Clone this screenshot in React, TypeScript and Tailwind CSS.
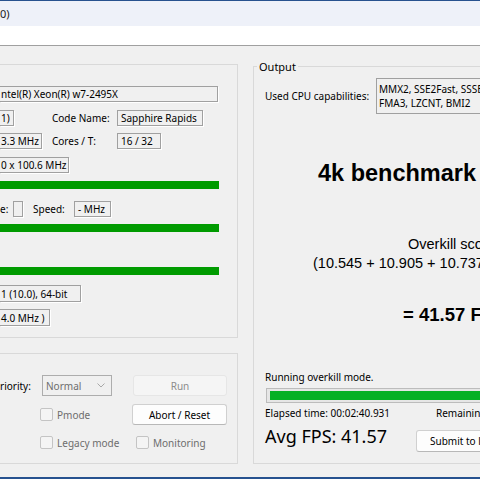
import type { ReactNode } from "react";

function Field({
  width,
  height = 16,
  children,
  noLeft = false,
}: {
  width: number;
  height?: number;
  children?: ReactNode;
  noLeft?: boolean;
}) {
  return (
    <div
      className={`flex shrink-0 items-center overflow-hidden whitespace-nowrap border border-[#a0a0a0] shadow-[1px_1px_0_#ffffff] ${
        noLeft ? "border-l-0 pl-px" : "pl-[3px]"
      }`}
      style={{ width, height }}
    >
      {children}
    </div>
  );
}

function Bar() {
  return <div className="h-[8px] w-[219px] bg-[#009b00]" />;
}

function Check({ label }: { label: string }) {
  return (
    <div className="flex items-center gap-[4px] text-[#6d6d6d]">
      <span className="h-[13px] w-[13px] rounded-[2px] border border-[#c4c4c4] bg-[#f4f4f4]" />
      <span>{label}</span>
    </div>
  );
}

export default function App() {
  return (
    <div className="h-[479px] w-[480px] overflow-hidden bg-[#f0f0f0] font-['Noto_Sans',sans-serif] text-[10px] leading-none text-black">
      <div className="h-px bg-[#27528f]" />
      <div className="flex h-[25px] items-center bg-[#eef1f9] text-[11px] text-[#1a1a1a]">0)</div>
      <div className="h-[19px] bg-white" />
      <div className="h-px bg-[#a0a0a0]" />

      <div className="flex h-[431px]">
        {/* left column */}
        <div className="flex w-[238px] shrink-0 flex-col">
          <div className="mt-[18px] flex h-[274px] flex-col border-b border-r border-t border-[#d9d9d9]">
            <div className="mt-[21px]">
              <Field width={218} noLeft>
                ntel(R) Xeon(R) w7-2495X
              </Field>
            </div>
            <div className="mt-[8px] flex h-[16px] items-center">
              <Field width={14} noLeft>
                1)
              </Field>
              <span className="ml-[38px] w-[65px]">Code Name:</span>
              <Field width={86}>Sapphire Rapids</Field>
            </div>
            <div className="mt-[7px] flex h-[16px] items-center">
              <Field width={42} noLeft>
                3.3 MHz
              </Field>
              <span className="ml-[10px] w-[65px]">Cores / T:</span>
              <Field width={44}>16 / 32</Field>
            </div>
            <div className="mt-[8px]">
              <Field width={69} noLeft>
                0 x 100.6 MHz
              </Field>
            </div>
            <div className="mt-[8px]">
              <Bar />
            </div>
            <div className="mt-[12px] flex h-[16px] items-center">
              <span className="w-[13px]">e:</span>
              <Field width={10} />
              <span className="ml-[10px] w-[41px]">Speed:</span>
              <Field width={37}>- MHz</Field>
            </div>
            <div className="mt-[7px]">
              <Bar />
            </div>
            <div className="mt-[35px]">
              <Bar />
            </div>
            <div className="mt-[10px]">
              <Field width={81} height={17} noLeft>
                1 (10.0), 64-bit
              </Field>
            </div>
            <div className="mt-[7px]">
              <Field width={50} height={17} noLeft>
                4.0 MHz )
              </Field>
            </div>
          </div>

          <div className="mt-[15px] flex h-[111px] flex-col border-b border-r border-t border-[#d9d9d9]">
            <div className="mt-[21px] flex h-[21px] items-center">
              <span className="w-[42px]">riority:</span>
              <div className="flex h-[21px] w-[70px] items-center justify-between border border-[#adadad] pl-[3px] pr-[6px] text-[#6d6d6d]">
                <span>Normal</span>
                <svg width="8" height="5" viewBox="0 0 8 5">
                  <polyline points="0.5,0.5 4,4 7.5,0.5" fill="none" stroke="#a8a8a8" strokeWidth="1" />
                </svg>
              </div>
              <div className="ml-[21px] flex h-[21px] w-[94px] items-center justify-center rounded-[3px] border border-[#e6e6e6] bg-[#f5f5f5] text-[#8c8c8c]">
                Run
              </div>
            </div>
            <div className="mt-[8px] flex h-[21px] items-center pl-[40px]">
              <div className="w-[92px]">
                <Check label="Pmode" />
              </div>
              <div className="flex h-[21px] w-[95px] items-center justify-center rounded-[3px] border border-[#d0d0d0] border-b-[#b8b8b8] bg-[#fdfdfd]">
                Abort / Reset
              </div>
            </div>
            <div className="mt-[10px] flex h-[15px] items-center pl-[40px]">
              <div className="w-[96px]">
                <Check label="Legacy mode" />
              </div>
              <Check label="Monitoring" />
            </div>
          </div>
        </div>

        {/* right: output group */}
        <div className="relative ml-[15px] mt-[20px] flex h-[398px] w-[420px] shrink-0 flex-col border-l border-t border-b border-[#d9d9d9]">
          <span className="absolute -top-[7px] left-[3px] bg-[#f0f0f0] px-[2px] text-[11px] leading-[13px]">Output</span>

          <div className="mt-[11px] flex h-[36px] items-center pl-[11px]">
            <span className="w-[111px] shrink-0">Used CPU capabilities:</span>
            <div className="h-[36px] flex-1 border border-[#a0a0a0] pl-[2px] pt-[3px] leading-[14px] whitespace-nowrap">
              <div>MMX2, SSE2Fast, SSSE3, SSE4.1, SSE4.2, AVX, AVX2,</div>
              <div>FMA3, LZCNT, BMI2</div>
            </div>
          </div>

          <div className="mt-[47px] h-[24px] whitespace-nowrap pl-[64px] font-['Liberation_Sans',Arial,sans-serif] text-[23.5px] font-bold leading-[24px]">
            4k benchmark
          </div>
          <div className="mt-[51px] h-[16px] whitespace-nowrap pl-[154px] font-['Liberation_Sans',Arial,sans-serif] text-[14.5px] leading-[16px]">
            Overkill score:
          </div>
          <div className="mt-[3px] h-[16px] whitespace-nowrap pl-[59px] font-['Liberation_Sans',Arial,sans-serif] text-[14.5px] leading-[16px]">
            (10.545 + 10.905 + 10.737 + 9.383)
          </div>
          <div className="mt-[34px] h-[20px] whitespace-nowrap pl-[149px] font-['Liberation_Sans',Arial,sans-serif] text-[18.5px] font-bold leading-[20px]">
            = 41.57 FPS
          </div>

          <div className="mt-[45px] h-[14px] pl-[11px] leading-[14px]">Running overkill mode.</div>
          <div className="ml-[12px] mt-[4px] h-[15px] border border-[#bcbcbc] bg-[#e6e6e6] px-[3px] py-[2px]">
            <div className="h-full w-full bg-[#06b025]" />
          </div>
          <div className="mt-[3px] flex h-[14px] whitespace-nowrap pl-[11px] leading-[14px]">
            <span className="w-[171px] shrink-0">Elapsed time: 00:02:40.931</span>
            <span>Remaining time: 00:00:00.000</span>
          </div>
          <div className="mt-[5px] flex h-[27px] items-start whitespace-nowrap pl-[11px]">
            <span className="w-[151px] shrink-0 text-[18px] leading-[22px]">Avg FPS: 41.57</span>
            <div className="mt-[5px] flex h-[22px] w-[100px] items-center rounded-[3px] border border-[#d0d0d0] border-b-[#b8b8b8] bg-[#fdfdfd] pl-[13px]">
              Submit to list
            </div>
          </div>
        </div>
      </div>

      <div className="h-[2px] bg-[#27528f]" />
    </div>
  );
}
